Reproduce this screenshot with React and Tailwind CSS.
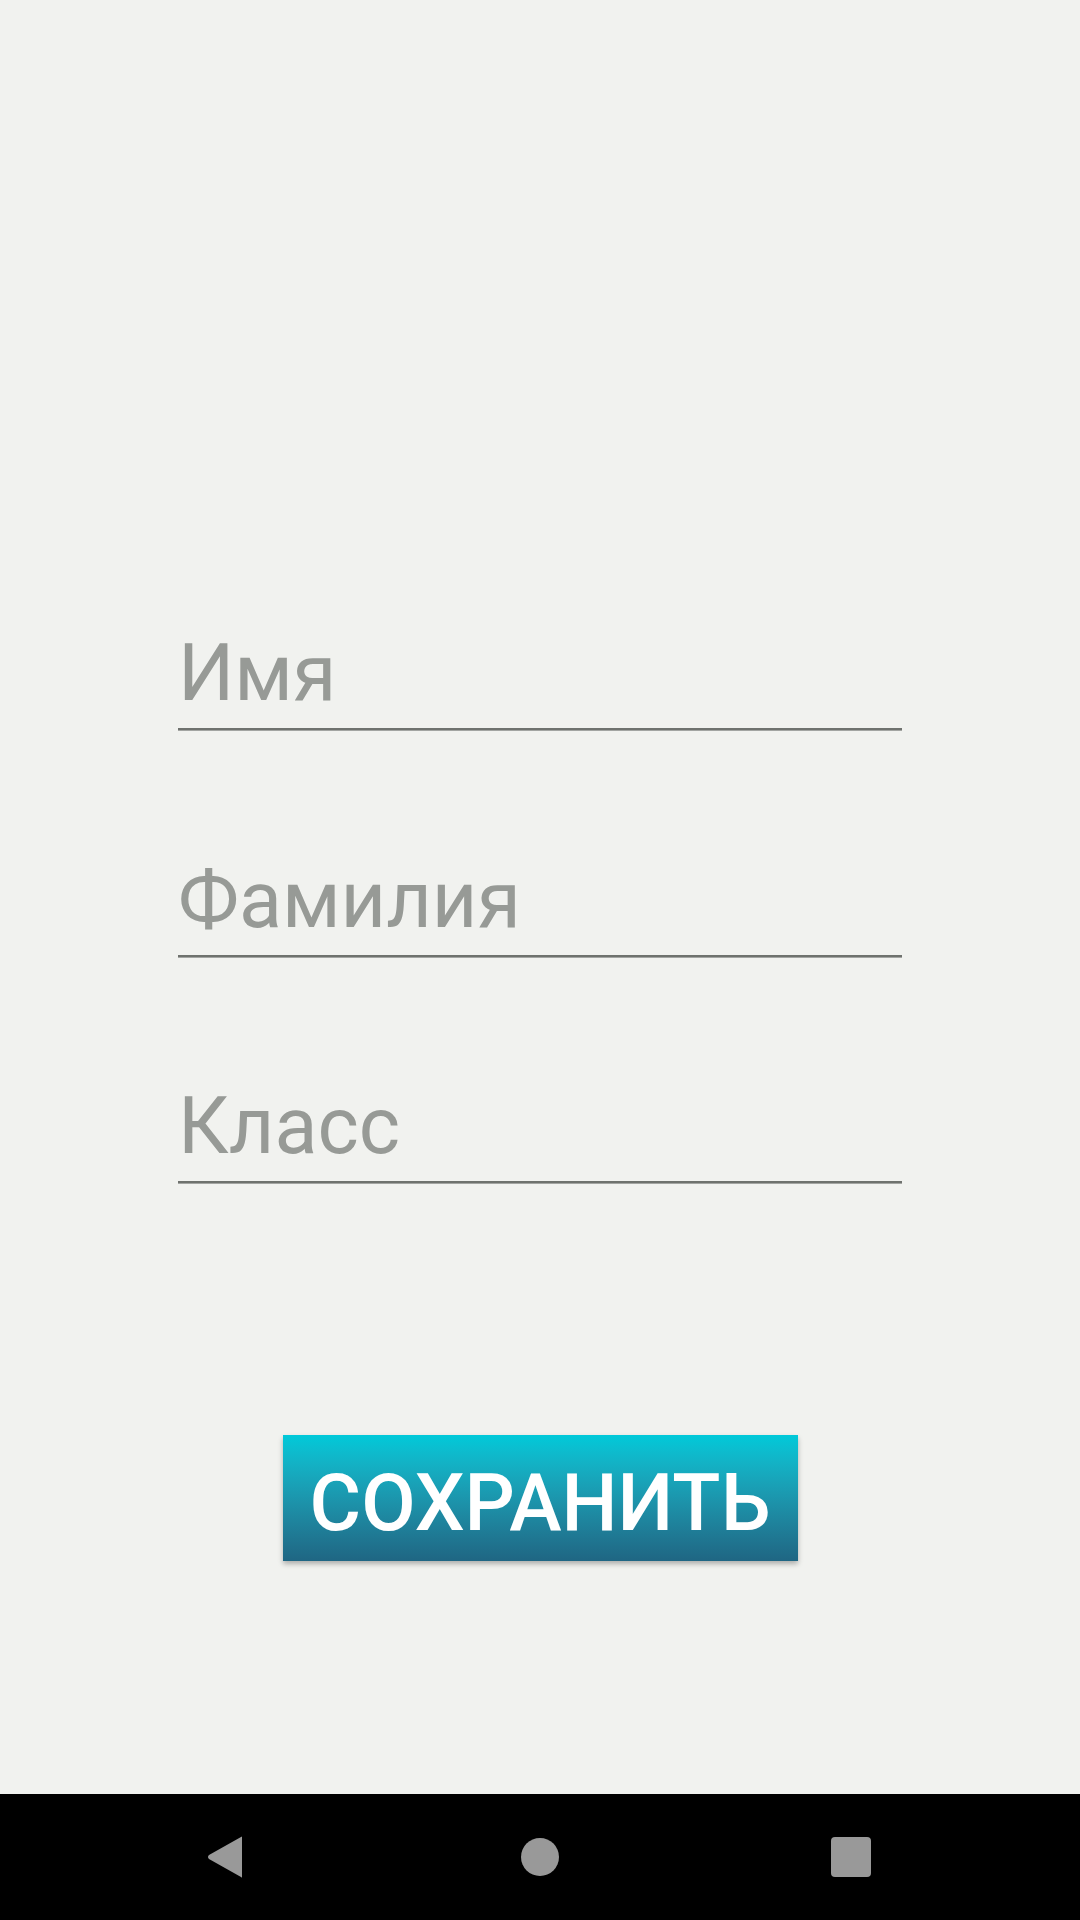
export default function App() {
  const fields = [
    { label: "Имя", mt: "mt-[626px]" },
    { label: "Фамилия", mt: "mt-[122px]" },
    { label: "Класс", mt: "mt-[121px]" },
  ];
  return (
    <div
      className="w-[1080px] h-[1920px] flex flex-col bg-[#f1f2ef] overflow-hidden"
      style={{ fontFamily: "Roboto, 'Noto Sans', sans-serif" }}
    >
      <div className="h-[1794px] flex flex-col items-center">
        {fields.map((f) => (
          <div key={f.label} className={`${f.mt} w-[724px] flex flex-col`}>
            <div className="h-[94px] text-[79px] leading-[94px] text-[#979a96] whitespace-nowrap">
              {f.label}
            </div>
            <div className="mt-[8px] h-[2px] bg-[#6f726e]" />
            <div className="h-[1px] bg-[#a3a5a2]" />
          </div>
        ))}
        <div className="mt-[251px] w-[515px] h-[126px] pt-[10px] flex items-center justify-center bg-gradient-to-b from-[#00c9d9] to-[#1f6683] shadow-[0_3px_5px_rgba(0,0,0,0.28)]">
          <span className="text-[79px] leading-[94px] font-medium text-white whitespace-nowrap">
            СОХРАНИТЬ
          </span>
        </div>
      </div>
      <div className="h-[126px] bg-black flex items-center">
        <div className="w-[1080px] h-[42px] relative">
          <svg className="absolute left-[207px] top-0" width="36" height="42" viewBox="0 0 36 42">
            <path d="M35 1 L35 41 Q35 42 34 41 L2 23 Q0 21 2 19 L34 1 Q35 0 35 1 Z" fill="#999999" />
          </svg>
          <div className="absolute left-[521px] top-[2px] w-[38px] h-[38px] rounded-full bg-[#999999]" />
          <div className="absolute left-[831px] top-[1px] w-[40px] h-[40px] rounded-[4px] bg-[#999999]" />
        </div>
      </div>
    </div>
  );
}
